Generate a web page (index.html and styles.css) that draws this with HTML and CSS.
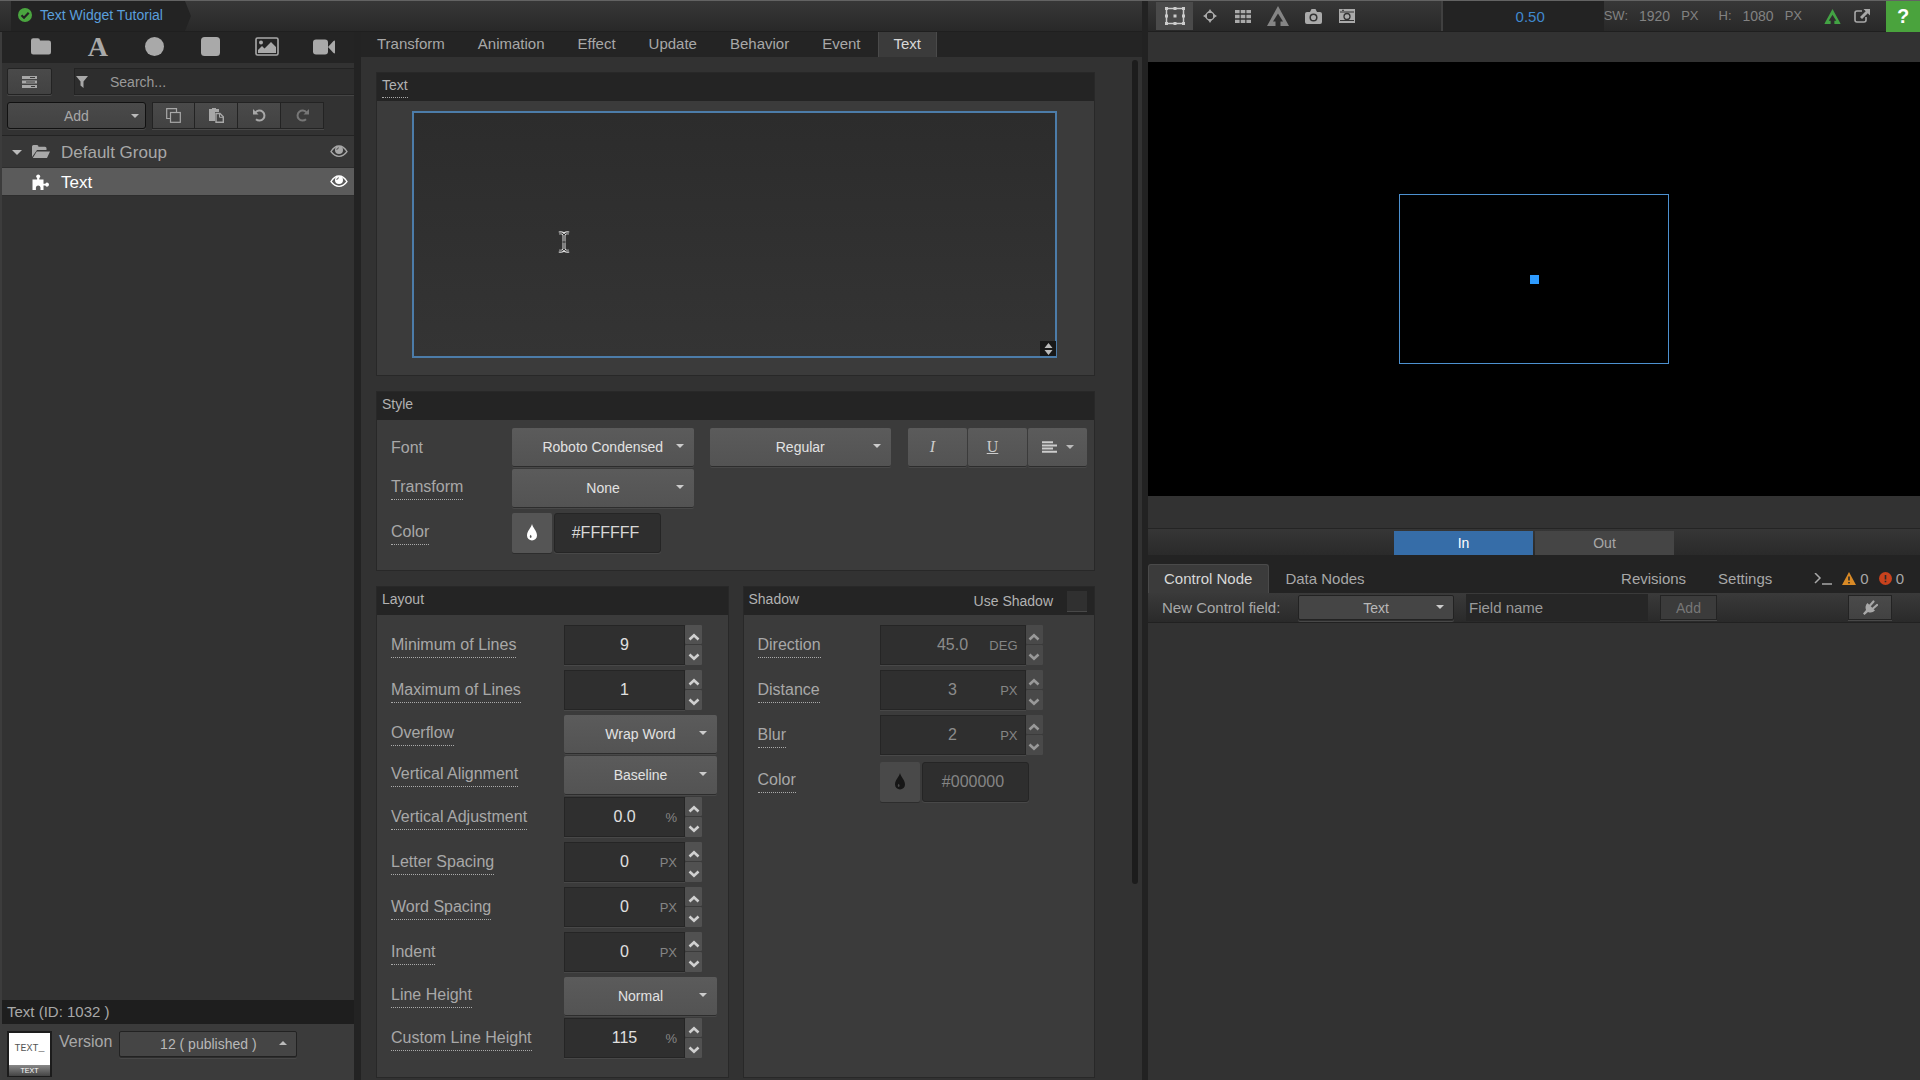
FILE: index.html
```html
<!DOCTYPE html>
<html lang="en">
<head>
<meta charset="utf-8">
<title>Text Widget Tutorial</title>
<link rel="stylesheet" href="styles.css">
</head>
<body>
<svg class="defs" aria-hidden="true">
  <symbol id="eye" viewBox="0 0 18 12"><path d="M1 6.500C3.500 2.500 6 1 9 1s5.500 1.500 8 5.500C14.500 10 12 11.300 9 11.300S3.500 10 1 6.500z" fill="none" stroke="currentColor" stroke-width="1.300"/><circle cx="9" cy="5" r="4" fill="currentColor"/><path d="M6.800 5A2.200 2.200 0 0 1 9 2.800" fill="none" stroke="#444" stroke-width=".8"/></symbol>
  <symbol id="up" viewBox="0 0 12 8"><path d="M1.500 6.500 6 2.200l4.500 4.300" fill="none" stroke="currentColor" stroke-width="2.600"/></symbol>
  <symbol id="down" viewBox="0 0 12 8"><path d="M1.500 1.500 6 5.800l4.500-4.300" fill="none" stroke="currentColor" stroke-width="2.600"/></symbol>
  <symbol id="drop" viewBox="0 0 12 18"><path fill-rule="evenodd" d="M6 0c.7 3.500 5 7 5 11.500a5 5 0 0 1-10 0C1 7 5.300 3.500 6 0zM4.600 10.800q-1.600 2.400 0 3.200 2-.8 0-3.200z" fill="currentColor"/></symbol>
  <symbol id="peak" viewBox="0 0 22 20"><path d="M11 0 22 20h-8.500v-4.500H16L11 7.500l-5 8h2.500V20H0z" fill="currentColor"/></symbol>
</svg>
<div class="app">
  <div class="editor">
    <header class="crumbs">
      <a class="crumb" href="#"><svg class="i14" viewBox="0 0 14 14"><circle cx="7" cy="7" r="7" fill="#4aa53f"/><path d="M3.500 7.200 6 9.700l4.700-5" fill="none" stroke="#222" stroke-width="2.200"/></svg>Text Widget Tutorial</a>
    </header>
    <div class="columns">
      <aside class="sidebar">
        <div class="shapes">
          <button aria-label="Folder"><svg width="20" height="17" viewBox="0 0 20 17"><path d="M0 2.500A2.200 2.200 0 0 1 2.200.3h4.600A2.200 2.200 0 0 1 9 2.500h8.800A2.200 2.200 0 0 1 20 4.700v9.600a2.200 2.200 0 0 1-2.200 2.200H2.200A2.200 2.200 0 0 1 0 14.300z" fill="currentColor"/></svg></button>
          <button aria-label="Text" class="glyph">A</button>
          <button aria-label="Circle"><svg width="19" height="19"><circle cx="9.500" cy="9.500" r="9.500" fill="currentColor"/></svg></button>
          <button aria-label="Rectangle"><svg width="19" height="19"><rect width="19" height="19" rx="3.500" fill="currentColor"/></svg></button>
          <button aria-label="Image"><svg width="24" height="19" viewBox="0 0 24 19"><rect x="1" y="1" width="22" height="17" rx="1.500" fill="none" stroke="currentColor" stroke-width="1.600"/><circle cx="6" cy="5.500" r="2" fill="currentColor"/><path d="M3 16v-3l4-4 2.500 2.500L16 5l5 5v6z" fill="currentColor"/></svg></button>
          <button aria-label="Video"><svg width="22" height="16" viewBox="0 0 22 16"><rect y=".5" width="15" height="15" rx="3" fill="currentColor"/><path d="M15 8 20.500 2q1.500-1 1.500.5v11q0 1.500-1.500.5z" fill="currentColor"/></svg></button>
        </div>
        <div class="searchrow">
          <button class="btn listbtn" aria-label="View"><svg width="15" height="12" viewBox="0 0 15 12"><path d="M0 0h15v3H0zM0 4.500h15v3H0zM0 9h15v3H0z" fill="currentColor"/><path d="M8 1.500h5M4 6h9M9 10.500h4" stroke="#3c3c3c"/></svg></button>
          <div class="search"><svg width="12" height="12" viewBox="0 0 12 12"><path d="M0 0h12L7.500 5.500V12L4.500 9.500v-4z" fill="currentColor"/></svg><input type="text" placeholder="Search..." aria-label="Search"></div>
        </div>
        <div class="tools">
          <button class="btn addbtn">Add<i class="caret"></i></button>
          <div class="group">
            <button class="btn" aria-label="Copy"><svg width="15" height="15" viewBox="0 0 15 15"><path d="M4.500 10.500H.7V.7h9.800v3.800" fill="none" stroke="currentColor" stroke-width="1.200"/><rect x="4.500" y="4.500" width="9.800" height="9.800" fill="none" stroke="currentColor" stroke-width="1.200"/></svg></button>
            <button class="btn" aria-label="Paste"><svg width="15" height="15" viewBox="0 0 15 15"><path d="M0 1h3V0h4v1h3v3H6v9H0z" fill="currentColor"/><path d="M7 5.500h4l3.300 3.300v5.500H7z" fill="none" stroke="currentColor" stroke-width="1.400"/><path d="M10.500 5.500v3.800h3.800" fill="none" stroke="currentColor"/></svg></button>
            <button class="btn" aria-label="Undo"><svg width="13" height="13" viewBox="0 0 13 13"><path d="M2.500 3.500A5 5 0 1 1 3 10.200" fill="none" stroke="currentColor" stroke-width="2"/><path d="M0 0v5.500h5.500z" fill="currentColor"/></svg></button>
            <button class="btn off" aria-label="Redo"><svg width="13" height="13" viewBox="0 0 13 13"><path d="M10.500 3.500A5 5 0 1 0 10 10.200" fill="none" stroke="currentColor" stroke-width="2"/><path d="M13 0v5.500H7.500z" fill="currentColor"/></svg></button>
          </div>
        </div>
        <ul class="tree">
          <li class="node"><i class="caret"></i><svg class="kind" width="18" height="14" viewBox="0 0 18 14"><path d="M0 12V1.500Q0 0 1.500 0H5q1.500 0 1.500 1.700H13q1.500 0 1.500 1.500V5H5z" fill="currentColor"/><path d="M4.700 6.500H18L15 13H.8z" fill="currentColor"/></svg><span>Default Group</span><button class="see" aria-label="Toggle visibility"><svg width="18" height="12"><use href="#eye"/></svg></button></li>
          <li class="node on"><svg class="kind" width="17" height="17" viewBox="0 0 17 17"><path d="M0 5.500h4.600V4Q3.600 3.200 3.600 2.200 4 .5 5.700.5t2.100 1.700q0 1-1 1.800v1.500H11v4.200h1.800q.8-1.200 1.800-1.200 1.900.4 1.900 2.100t-1.900 2.100q-1 0-1.800-1.200H11V16H8v-2.500q-.3-2-2.300-2t-2.300 2V16H0z" fill="currentColor"/></svg><span>Text</span><button class="see" aria-label="Toggle visibility"><svg width="18" height="12"><use href="#eye"/></svg></button></li>
        </ul>
        <footer class="info">
          <h2 class="idline">Text (ID: 1032 )</h2>
          <div class="version">
            <div class="thumb"><span class="thumbtop">TEXT_</span><span class="thumbname">TEXT</span></div>
            <label for="ver">Version</label>
            <span class="select small up"><select id="ver"><option>12 ( published )</option></select></span>
          </div>
        </footer>
      </aside>
      <main class="props">
        <nav class="tabs">
          <a href="#">Transform</a><a href="#">Animation</a><a href="#">Effect</a><a href="#">Update</a><a href="#">Behavior</a><a href="#">Event</a><a href="#" class="on">Text</a>
        </nav>
        <div class="scroller">
          <div class="panels">
            <section class="panel">
              <h2 class="head"><label for="txt" class="tip">Text</label></h2>
              <div class="textwrap"><textarea id="txt"></textarea><span class="grip"><svg width="9" height="12" viewBox="0 0 9 12"><path d="M4.500 0 8.500 5h-8zM.500 7h8l-4 5z" fill="#bbb"/></svg></span>
                <svg class="cursor" width="12" height="22" viewBox="0 0 12 22"><path d="M1 2q4-1 5 2 1-3 5-2M6 4v14M1 20q4 1 5-2 1 3 5 2M4.500 11h3" fill="none" stroke="#ddd" stroke-width="3"/><path d="M1 2q4-1 5 2 1-3 5-2M6 4v14M1 20q4 1 5-2 1 3 5 2M4.500 11h3" fill="none" stroke="#222"/></svg>
              </div>
            </section>
            <section class="panel">
              <h2 class="head">Style</h2>
              <div class="rows style">
                <div class="row"><label class="lab" for="font">Font</label>
                  <span class="select wide"><select id="font"><option>Roboto Condensed</option></select></span>
                  <span class="select wide"><select aria-label="Font weight"><option>Regular</option></select></span>
                  <div class="seg"><button class="ital">I</button><button class="und">U</button><button aria-label="Align"><svg width="15" height="12" viewBox="0 0 15 12"><path d="M0 1.200h11M0 4.400h15M0 7.600h11M0 10.800h15" stroke="currentColor" stroke-width="2"/></svg><i class="caret"></i></button></div>
                </div>
                <div class="row"><label class="lab" for="tf"><span class="tip">Transform</span></label><span class="select wide"><select id="tf"><option>None</option></select></span></div>
                <div class="row num"><label class="lab" for="col"><span class="tip">Color</span></label><div class="color"><button aria-label="Pick color"><svg width="12" height="18"><use href="#drop"/></svg></button><input id="col" value="#FFFFFF"></div></div>
              </div>
            </section>
            <div class="pair">
              <section class="panel">
                <h2 class="head">Layout</h2>
                <div class="rows">
                  <div class="row num"><label class="lab" for="a"><span class="tip">Minimum of Lines</span></label><div class="number"><input id="a" value="9"><button aria-label="Increase"><svg width="12" height="8"><use href="#up"/></svg></button><button aria-label="Decrease"><svg width="12" height="8"><use href="#down"/></svg></button></div></div>
                  <div class="row num"><label class="lab" for="b"><span class="tip">Maximum of Lines</span></label><div class="number"><input id="b" value="1"><button aria-label="Increase"><svg width="12" height="8"><use href="#up"/></svg></button><button aria-label="Decrease"><svg width="12" height="8"><use href="#down"/></svg></button></div></div>
                  <div class="row"><label class="lab" for="c"><span class="tip">Overflow</span></label><span class="select mid"><select id="c"><option>Wrap Word</option></select></span></div>
                  <div class="row"><label class="lab" for="d"><span class="tip">Vertical Alignment</span></label><span class="select mid"><select id="d"><option>Baseline</option></select></span></div>
                  <div class="row num"><label class="lab" for="e"><span class="tip">Vertical Adjustment</span></label><div class="number"><input id="e" value="0.0"><span class="unit">%</span><button aria-label="Increase"><svg width="12" height="8"><use href="#up"/></svg></button><button aria-label="Decrease"><svg width="12" height="8"><use href="#down"/></svg></button></div></div>
                  <div class="row num"><label class="lab" for="f"><span class="tip">Letter Spacing</span></label><div class="number"><input id="f" value="0"><span class="unit">PX</span><button aria-label="Increase"><svg width="12" height="8"><use href="#up"/></svg></button><button aria-label="Decrease"><svg width="12" height="8"><use href="#down"/></svg></button></div></div>
                  <div class="row num"><label class="lab" for="g"><span class="tip">Word Spacing</span></label><div class="number"><input id="g" value="0"><span class="unit">PX</span><button aria-label="Increase"><svg width="12" height="8"><use href="#up"/></svg></button><button aria-label="Decrease"><svg width="12" height="8"><use href="#down"/></svg></button></div></div>
                  <div class="row num"><label class="lab" for="h"><span class="tip">Indent</span></label><div class="number"><input id="h" value="0"><span class="unit">PX</span><button aria-label="Increase"><svg width="12" height="8"><use href="#up"/></svg></button><button aria-label="Decrease"><svg width="12" height="8"><use href="#down"/></svg></button></div></div>
                  <div class="row"><label class="lab" for="i"><span class="tip">Line Height</span></label><span class="select mid"><select id="i"><option>Normal</option></select></span></div>
                  <div class="row num"><label class="lab" for="j"><span class="tip">Custom Line Height</span></label><div class="number"><input id="j" value="115"><span class="unit">%</span><button aria-label="Increase"><svg width="12" height="8"><use href="#up"/></svg></button><button aria-label="Decrease"><svg width="12" height="8"><use href="#down"/></svg></button></div></div>
                </div>
              </section>
              <section class="panel shadow">
                <h2 class="head">Shadow<label class="use">Use Shadow<input type="checkbox"></label></h2>
                <div class="rows">
                  <div class="row num"><label class="lab" for="k"><span class="tip">Direction</span></label><div class="number"><input id="k" value="45.0" disabled><span class="unit">DEG</span><button aria-label="Increase" disabled><svg width="12" height="8"><use href="#up"/></svg></button><button aria-label="Decrease" disabled><svg width="12" height="8"><use href="#down"/></svg></button></div></div>
                  <div class="row num"><label class="lab" for="l"><span class="tip">Distance</span></label><div class="number"><input id="l" value="3" disabled><span class="unit">PX</span><button aria-label="Increase" disabled><svg width="12" height="8"><use href="#up"/></svg></button><button aria-label="Decrease" disabled><svg width="12" height="8"><use href="#down"/></svg></button></div></div>
                  <div class="row num"><label class="lab" for="m"><span class="tip">Blur</span></label><div class="number"><input id="m" value="2" disabled><span class="unit">PX</span><button aria-label="Increase" disabled><svg width="12" height="8"><use href="#up"/></svg></button><button aria-label="Decrease" disabled><svg width="12" height="8"><use href="#down"/></svg></button></div></div>
                  <div class="row num"><label class="lab" for="n"><span class="tip">Color</span></label><div class="color"><button aria-label="Pick color" disabled><svg width="12" height="18"><use href="#drop"/></svg></button><input id="n" value="#000000" disabled></div></div>
                </div>
              </section>
            </div>
          </div>
          <div class="bar"></div>
        </div>
      </main>
    </div>
  </div>
  <div class="preview">
    <header class="viewbar">
      <div class="viewtools">
        <button class="on" aria-label="Bounding box"><svg width="22" height="20" viewBox="0 0 22 20"><rect x="2.500" y="2.500" width="17" height="15" fill="none" stroke="currentColor" stroke-width="1.500"/><path d="M1 1h3v3H1zM9.500 1h3v3h-3zM18 1h3v3h-3zM1 16h3v3H1zM9.500 16h3v3h-3zM18 16h3v3h-3zM1 8.500h3v3H1zM18 8.500h3v3h-3zM9.500 8.500h3v3h-3z" fill="currentColor"/></svg></button>
        <button aria-label="Anchor"><svg width="14" height="14" viewBox="0 0 14 14"><circle cx="7" cy="7" r="4" fill="none" stroke="currentColor" stroke-width="1.500"/><path d="m7 0 2.500 4h-5zM7 14l2.500-4h-5zM0 7l4-2.500v5zM14 7l-4-2.500v5z" fill="currentColor"/></svg></button>
        <button aria-label="Grid"><svg width="16" height="13" viewBox="0 0 16 13"><path d="M0 1.500h16M0 6.500h16M0 11.500h16" stroke="currentColor" stroke-width="3.400" stroke-dasharray="4.600 1.100"/></svg></button>
        <button aria-label="Safe area"><svg width="22" height="20"><use href="#peak"/></svg></button>
        <button aria-label="Camera"><svg width="17" height="15" viewBox="0 0 17 15"><path d="M2 3h3l1.500-3h4L12 3h3q2 0 2 2v8q0 2-2 2H2q-2 0-2-2V5q0-2 2-2z" fill="currentColor"/><circle cx="8.500" cy="8.500" r="3.300" fill="none" stroke="#333" stroke-width="1.500"/></svg></button>
        <button aria-label="Snapshot"><svg width="16" height="14" viewBox="0 0 16 14"><path d="M0 0h16v14H0z" fill="currentColor"/><path d="M1 3h14M1 11.500h14M3 1.300h2" stroke="#333"/><circle cx="8" cy="7.500" r="3" fill="#aaa" stroke="#333" stroke-width="1.300"/></svg></button>
      </div>
      <input class="scale" value="0.50" aria-label="Zoom">
      <div class="dims"><span>SW:</span><b>1920</b><span class="px">PX</span><span>H:</span><b>1080</b><span>PX</span></div>
      <svg class="green" width="17" height="15" viewBox="0 0 22 20"><use href="#peak" width="22" height="20"/></svg>
      <a class="ext" href="#" aria-label="Open in new window"><svg width="16" height="15" viewBox="0 0 16 15"><path d="M8 2H3Q1 2 1 4v7q0 2 2 2h7q2 0 2-2V8" fill="none" stroke="currentColor" stroke-width="1.600"/><path d="M9.500 0H16v6.500l-2.200-2.200L8 10 6 8l5.700-5.800z" fill="currentColor"/></svg></a>
      <button class="help">?</button>
    </header>
    <div class="stage"><div class="canvas"><div class="sel"></div></div></div>
    <div class="inout"><button class="on">In</button><button>Out</button></div>
    <nav class="nodetabs">
      <a href="#" class="on">Control Node</a><a href="#">Data Nodes</a><a href="#" class="right">Revisions</a><a href="#">Settings</a>
      <div class="status">
        <svg width="18" height="12" viewBox="0 0 18 12"><path d="m1 0 5 5-5 5M8 11h10" fill="none" stroke="currentColor" stroke-width="1.500"/></svg>
        <svg class="warn" width="14" height="13" viewBox="0 0 14 13"><path d="M7 0l7 13H0z" fill="#d98a26"/><path d="M7 4.500v4M7 10v1.500" stroke="#2a2a2a" stroke-width="1.600"/></svg><span>0</span>
        <svg class="err" width="13" height="13"><circle cx="6.500" cy="6.500" r="6.500" fill="#c8421d"/><path d="M6.500 3v4.500M6.500 8.800v1.500" stroke="#2a2a2a" stroke-width="1.600"/></svg><span>0</span>
      </div>
    </nav>
    <div class="newfield">
      <label for="kind">New Control field:</label>
      <span class="select small kindsel"><select id="kind"><option>Text</option></select></span>
      <input type="text" placeholder="Field name" aria-label="Field name">
      <button class="btn off">Add</button>
      <button class="btn plug" aria-label="Connect"><svg width="16" height="15" viewBox="0 0 16 15"><path d="M5.500 3 13 10.500Q10 13.500 6 12L2.500 15 1 13.500 4 10Q2.500 6 5.500 3z" fill="currentColor"/><path d="M8 5.500 11.500 1.500M11 8.500 15 5" stroke="currentColor" stroke-width="2.200" stroke-linecap="round"/></svg></button>
    </div>
    <div class="rest"></div>
  </div>
</div>
</body>
</html>
```
FILE: styles.css
```css
* { box-sizing: border-box; }
body { margin: 0; background: #323232; color: #a8a8a8; font: 16px/18px "Liberation Sans", Arial, sans-serif; }
button, input, select, textarea { font: inherit; color: inherit; margin: 0; padding: 0; border: 0; background: none; border-radius: 0; outline: 0; }
input { min-width: 0; text-overflow: clip; }
button { display: flex; align-items: center; justify-content: center; }
a { color: inherit; text-decoration: none; }
h2 { margin: 0; font-weight: 400; }
ul { margin: 0; padding: 0; list-style: none; }
svg { flex: none; display: block; }
.defs { position: absolute; width: 0; height: 0; }
.app { display: grid; grid-template-columns: minmax(0, 1148fr) minmax(0, 772fr); min-height: 100vh; border-top: 1px solid #636363; }
.editor { display: flex; flex-direction: column; border-right: 6px solid #222; }
.caret { width: 0; height: 0; border: 4px solid transparent; border-top-color: #bbb; border-bottom: 0; }

.crumbs, .viewbar { height: 31px; background: linear-gradient(#373737, #282828); border-bottom: 1px solid #1f1f1f; }
.crumbs { padding-left: 11px; display: flex; }
.crumb { display: flex; align-items: center; gap: 8px; height: 30px; padding: 0 28px 2px 7px; background: #232323; color: #5a9fdc; font-size: 14px; clip-path: polygon(0 0, calc(100% - 6px) 0, 100% 50%, calc(100% - 6px) 100%, 0 100%); }
.i14 { width: 14px; height: 14px; }
.columns { flex: 1; display: grid; grid-template-columns: 361px minmax(0, 1fr); }

.sidebar { display: flex; flex-direction: column; border-right: 7px solid #232323; border-left: 2px solid #3c3c3c; }
.shapes { height: 31px; background: #242424; display: grid; grid-template-columns: repeat(6, 1fr); padding: 0 2px 2px 11px; color: #a9a9a9; }
.glyph { font: bold 28px/28px "Liberation Serif", serif; }
.btn { background: linear-gradient(#4a4a4a, #424242); border: 1px solid #232323; font-size: 14px; box-shadow: 0 1px 0 #484848; }
.searchrow { display: flex; gap: 22px; padding: 5px 0 0 5px; }
.listbtn { width: 45px; height: 27px; border-radius: 2px; }
.search { flex: 1; height: 27px; display: flex; align-items: center; gap: 22px; padding-left: 1px; background: #2d2d2d; border: 1px solid #232323; border-right: 0; font-size: 14px; box-shadow: 0 1px 0 #444; }
.search input { width: 160px; }
::placeholder { color: #9a9a9a; opacity: 1; }
.tools { display: flex; gap: 6px; padding: 7px 0 6px 5px; }
.addbtn { width: 139px; height: 27px; border-color: #111; border-radius: 3px; padding: 0 6px 0 56px; justify-content: space-between; }
.group { display: grid; grid-template-columns: repeat(4, 43px); }
.group .btn + .btn { border-left: 0; }
.off { color: #777; background: #3b3b3b; }
.tree { flex: 1; border-top: 1px solid #232323; }
.node { height: 32px; display: flex; align-items: center; padding: 3px 6px 0 10px; background: #373737; border-bottom: 1px solid #2d2d2d; font-size: 17px; }
.node .kind { margin: 0 0 2px 10px; width: 18px; }
.node span { margin-left: 11px; flex: 1; }
.node .caret { border-width: 5px 5px 0; margin-bottom: 2px; }
.node.on { height: 28px; background: #5b5b5b; color: #fff; }
.node.on .kind { margin-left: 20px; }
.see { height: 20px; padding-bottom: 4px; }
.idline { height: 24px; padding: 0 5px 0; background: #1e1e1e; font-size: 15px; line-height: 24px; }
.version { height: 56px; background: #3b3b3b; display: flex; align-items: flex-start; gap: 7px; padding: 7px 5px 0; }
.version label { padding-top: 1px; line-height: 20px; }
.thumb { width: 45px; height: 46px; border: 2px solid #1c1c1c; background: #fff; display: flex; flex-direction: column; text-align: center; }
.thumbtop { flex: 1; color: #555; font: 10px/32px "Liberation Mono", monospace; }
.thumbname { height: 11px; background: linear-gradient(#888, #444); color: #fff; font-size: 7px; line-height: 11px; }

.select { position: relative; display: block; }
.select select { appearance: none; display: block; width: 100%; height: 100%; text-align: center; text-align-last: center; font-size: 14px; background: linear-gradient(#5b5b5b, #535353); border-radius: 2px; color: #e2e2e2; box-shadow: 0 1px 0 #2d2d2d, 0 2px 0 #484848; }
.select::after { content: ""; position: absolute; right: 10px; top: 50%; margin-top: -3px; border: 4px solid transparent; border-top-color: #ccc; border-bottom: 0; pointer-events: none; }
.select.up::after { border: 4px solid transparent; border-bottom-color: #bbb; border-top: 0; }
.select.small select { background: #454545; border: 1px solid #222; color: #b8b8b8; }
.version .select { width: 178px; height: 26px; }

.props { display: flex; flex-direction: column; background: #323232; }
.tabs { height: 25px; display: flex; gap: 1px; background: #242424; font-size: 15px; }
.tabs a { padding: 0 16px; line-height: 23px; }
.tabs .on, .nodetabs .on { background: #3b3b3b; color: #d8d8d8; border: solid #4a4a4a; border-width: 0 1px; }
.tabs .on { padding: 0 15px; }
.scroller { flex: 1; display: flex; gap: 37px; padding: 15px 4px 2px 15px; }
.panels { flex: 1; display: flex; flex-direction: column; gap: 15px; min-width: 0; }
.bar { width: 6px; height: 824px; margin-top: -12px; border-radius: 3px; background: #1c1c1c; }
.panel { border: 1px solid #282828; background: #3b3b3b; }
.head { height: 28px; display: flex; align-items: center; padding: 0 5px 4px; background: #242424; font-size: 14px; color: #b2b2b2; }
.tip { display: inline-block; padding-bottom: 3px; border-bottom: 1px dotted #aaa; }
.head .tip { line-height: 17px; }
.head label.tip { margin-top: 4px; }
.textwrap { position: relative; padding: 10px 37px 17px 35px; }
textarea { display: block; width: 100%; height: 247px; border: 2px solid #4c7ca9; background: linear-gradient(#2c2c2c, #343434); resize: none; }
.grip { position: absolute; right: 38px; bottom: 19px; width: 16px; height: 15px; background: #181818; display: flex; align-items: center; justify-content: center; }
.cursor { position: absolute; left: 181px; top: 130px; }
.rows { padding: 10px 10px 14px 14px; }
.rows.style { padding: 8px 7px 15px 14px; }
.row { display: flex; height: 41px; align-items: flex-start; }
.row.num { height: 45px; }
.lab { width: 173px; height: 39px; display: flex; align-items: center; flex: none; }
.num .lab { height: 43px; }
.style .lab { width: 121px; height: 40px; }
.style .num .lab { height: 47px; }
.wide { width: 182px; height: 38px; }
.wide + .wide { margin-left: 16px; }
.mid { width: 153px; height: 38px; }
.seg { display: grid; grid-template-columns: repeat(3, 59px); gap: 1px; margin-left: 17px; height: 38px; color: #ccc; }
.seg button { gap: 9px; background: linear-gradient(#5b5b5b, #535353); border-radius: 2px; box-shadow: 0 1px 0 #2d2d2d, 0 2px 0 #484848; }
.ital, .und { font-family: "Liberation Serif", serif; padding-right: 10px; }
.ital { font-style: italic; }
.und { text-decoration: underline; }
.color { display: flex; gap: 2px; padding-top: 2px; }
.color button { width: 40px; height: 40px; background: #555; border-radius: 2px; color: #fff; box-shadow: 0 1px 0 #2d2d2d; }
.color input { width: 107px; height: 40px; padding-right: 4px; text-align: center; background: #2e2e2e; border: 1px solid #252525; border-radius: 3px; color: #d8d8d8; box-shadow: 0 1px 0 #484848; }
.style .color { padding-top: 3px; }
.number { display: grid; grid-template: 19px 20px / 121px 17px; row-gap: 1px; position: relative; color: #e0e0e0; }
.number input { grid-row: 1 / 3; text-align: center; background: #2f2f2f; border: 1px solid #252525; box-shadow: 0 1px 0 #484848; }
.number button { grid-column: 2; background: #515151; color: #d0d0d0; border-radius: 1px; padding-top: 4px; }
.unit { position: absolute; right: 25px; top: 12px; font-size: 13px; color: #858585; pointer-events: none; }
.pair { flex: 1; display: grid; grid-template-columns: 1fr 1fr; gap: 14px; }
.pair .panel { min-width: 0; }
.shadow .lab { width: 122px; }
.shadow .number { grid-template-columns: 146px 17px; color: #8c8c8c; }
.shadow .number button { color: #999; background: #494949; }
.shadow .color button { color: #161616; background: #494949; }
.shadow .color input { color: #858585; }
.use { display: flex; align-items: center; gap: 14px; margin-left: auto; padding: 4px 2px 0 0; }
.use input { appearance: none; width: 20px; height: 20px; background: #303030; box-shadow: 0 1px 0 #484848; }

.preview { display: flex; flex-direction: column; min-width: 0; background: #323232; }
.viewbar { display: flex; align-items: center; }
.viewtools { flex: 1; display: flex; align-items: center; padding-left: 8px; color: #aaa; }
.viewtools button { width: 33px; height: 28px; }
.viewtools .on { width: 37px; background: #4a4a4a; color: #ccc; }
.viewtools button:nth-child(4) { width: 38px; color: #858585; }
.scale { width: 163px; height: 30px; padding-left: 14px; text-align: center; background: #232323; border-left: 2px solid #404040; color: #4089cf; font-size: 15px; }
.dims { display: flex; align-items: center; gap: 11px; font-size: 13px; color: #828282; padding: 0 22px 0 0; }
.dims b { font-weight: 400; font-size: 14px; }
.dims .px { margin-right: 9px; }
.green { color: #43a344; }
.ext { margin: 0 16px 0 13px; }
.help { width: 34px; height: 31px; background: #4aa33d; color: #fff; font-size: 20px; font-weight: 700; }
.stage { padding: 30px 0 32px; }
.canvas { aspect-ratio: 16 / 9; background: #000; display: flex; align-items: center; justify-content: center; }
.sel { width: 35%; height: 39%; border: 1px solid #4d91d0; background: linear-gradient(#2e9bff, #2e9bff) center / 9px 9px no-repeat; }
.inout { height: 27px; display: flex; justify-content: center; gap: 2px; padding-top: 2px; background: linear-gradient(#363636, #2a2a2a); border-top: 1px solid #242424; }
.inout button { width: 139px; background: #454545; font-size: 14px; }
.inout .on { background: #366da8; color: #fff; }
.nodetabs { height: 38px; padding-top: 9px; display: flex; background: #232323; font-size: 15px; line-height: 29px; }
.nodetabs a { padding: 0 16px; }
.nodetabs .on { padding: 0 16px 0 15px; border-top-width: 1px; border-radius: 3px 3px 0 0; line-height: 28px; }
.nodetabs .right { margin-left: auto; }
.status { display: flex; align-items: center; padding: 0 16px 0 26px; }
.warn { margin: 0 4px 0 10px; }
.err { margin: 0 4px 0 10px; }
.newfield { height: 30px; display: flex; align-items: center; padding: 0 28px 0 14px; background: linear-gradient(#3a3a3a, #2a2a2a); border-bottom: 1px solid #212121; font-size: 15px; }
.kindsel { width: 156px; height: 25px; margin: 0 12px 0 auto; }
.newfield label { flex: 1; }
.newfield input { width: 182px; height: 27px; padding-left: 3px; background: #262626; }
.newfield .btn { width: 57px; height: 25px; margin-left: 12px; }
.newfield .plug { width: 44px; margin-left: 131px; }
.rest { flex: 1; }
```
